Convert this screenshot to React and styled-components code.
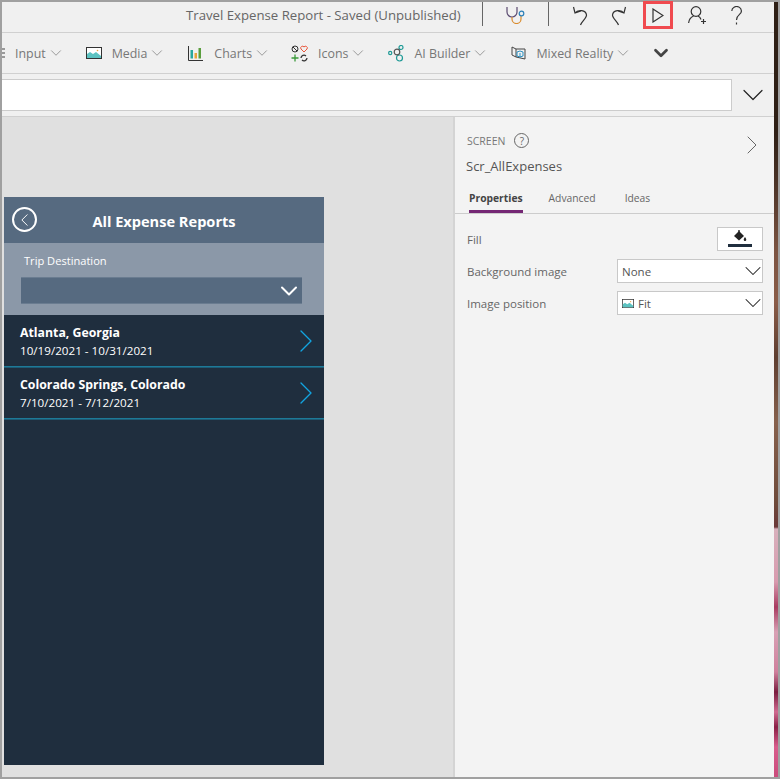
import React from 'react'
import styled, { createGlobalStyle } from 'styled-components'
import { ChevronDown, ChevronRight, ChevronLeft } from 'lucide-react'

const GlobalStyle = createGlobalStyle`
  html, body {
    margin: 0;
    padding: 0;
    background: #a0a0a0;
  }
  * {
    box-sizing: border-box;
  }
`
const Frame = styled.div`
  border-bottom: 2px solid #a0a0a0;
  border-left: 2px solid #a0a0a0;
  border-top: 2px solid #a0a0a0;
  display: flex;
  font-family: 'Open Sans', 'Liberation Sans', sans-serif;
  height: 779px;
  width: 780px;
`
const Main = styled.div`
  display: flex;
  flex: 1;
  flex-direction: column;
  min-width: 0;
`
const Edge = styled.div`
  background: linear-gradient(
    180deg,
    #2e1f15 0,
    #2e1f15 130px,
    #4a3226 180px,
    #7c5442 250px,
    #8a5c48 300px,
    #5e3e30 355px,
    #86604c 420px,
    #6e4a3a 500px,
    #6a3838 525px,
    #d8b0bc 527px,
    #d89aae 580px,
    #a83a60 605px,
    #d8a0b4 630px,
    #cf7f9c 670px,
    #7a1c3e 690px,
    #d06a90 710px,
    #8a1f45 725px,
    #d85c8c 745px,
    #c94a7a 777px
  );
  border-right: 2px solid #a0a0a0;
  width: 6px;
`
const TitleBar = styled.header`
  align-items: flex-start;
  background: #f0f0f0;
  border-bottom: 1px solid #d0d0d0;
  display: flex;
  height: 31px;
`
const Title = styled.span`
  color: #666;
  font-size: 13.2px;
  line-height: 27px;
  margin-left: 184px;
  white-space: nowrap;
  width: 296px;
`
const Divider = styled.span`
  background: #666;
  height: 24px;
  width: 1px;
`
const IconButton = styled.span`
  align-items: center;
  display: flex;
  height: 28px;
  justify-content: center;
  margin-left: ${(props) => props.gap || 0}px;
  margin-top: -1px;
  outline: ${(props) => (props.active ? '3px solid #f04a4f' : 'none')};
  outline-offset: -3px;
  width: ${(props) => props.width || 30}px;
`
const Ribbon = styled.nav`
  align-items: center;
  background: #f0f0f0;
  border-bottom: 1px solid #d0d0d0;
  display: flex;
  height: 41px;
  overflow: hidden;
`
const RibbonItem = styled.span`
  align-items: center;
  color: #777;
  display: flex;
  font-size: 12.4px;
  gap: 10px;
  margin-left: ${(props) => props.gap}px;
  white-space: nowrap;
`
const Caret = styled(ChevronDown)`
  color: #888;
  margin-left: -9px;
`
const FormulaBar = styled.div`
  align-items: center;
  background: #f0f0f0;
  border-bottom: 1px solid #d0d0d0;
  display: flex;
  height: 43px;
`
const FormulaInput = styled.div`
  background: #fff;
  border: 1px solid #ccc;
  border-left: none;
  height: 32px;
  width: 730px;
`
const FormulaToggle = styled.span`
  display: flex;
  justify-content: center;
  width: 42px;
`
const Body = styled.div`
  display: flex;
  flex: 1;
  min-height: 0;
`
const Canvas = styled.main`
  background: #e0e0e0;
  flex: 0 0 451px;
  padding: 80px 0 0 2px;
`
const Phone = styled.section`
  background: #1f2e3e;
  display: flex;
  flex-direction: column;
  height: 568px;
  width: 320px;
`
const PhoneHeader = styled.div`
  align-items: center;
  background: #566a80;
  color: #fff;
  display: flex;
  font-size: 14.6px;
  font-weight: 700;
  height: 46px;
  justify-content: center;
  padding-top: 2px;
  position: relative;
`
const BackButton = styled.span`
  align-items: center;
  border: 2px solid #fff;
  border-radius: 50%;
  display: flex;
  height: 25px;
  justify-content: center;
  left: 8px;
  position: absolute;
  top: 10px;
  width: 25px;
`
const Filter = styled.div`
  background: #8b98a8;
  color: #fff;
  font-size: 11.1px;
  height: 72px;
  padding: 10px 22px 0 17px;
`
const FilterLabel = styled.div`
  line-height: 16px;
  margin-left: 3px;
`
const FilterSelect = styled.div`
  align-items: center;
  background: #566a80;
  border-bottom: 1px solid #6a7c90;
  border-top: 1px solid #6a7c90;
  display: flex;
  height: 27px;
  justify-content: flex-end;
  margin-top: 8px;
`
const FilterCaret = styled(ChevronDown)`
  color: #fff;
  flex-shrink: 0;
  margin-right: -1px;
`
const Trip = styled.div`
  align-items: center;
  border-bottom: 1px solid #1d7a98;
  box-shadow: 0 1px 0 #1d5a74;
  color: #fff;
  display: flex;
  height: 52px;
  justify-content: space-between;
  padding: 2px 8px 0 16px;
`
const TripName = styled.div`
  font-size: 12.3px;
  font-weight: 700;
  line-height: 18px;
`
const TripDates = styled.div`
  font-size: 11.65px;
  line-height: 18px;
`
const TripArrow = styled(ChevronRight)`
  color: #12a4e0;
  flex-shrink: 0;
  margin: -2px -10px 0 0;
`
const Panel = styled.aside`
  background: #f3f3f3;
  border-left: 2px solid #d4d4d4;
  display: flex;
  flex: 1;
  flex-direction: column;
`
const PanelHead = styled.div`
  display: flex;
  justify-content: space-between;
  padding: 15px 14px 0 12px;
`
const PanelArrow = styled(ChevronRight)`
  color: #666;
  flex-shrink: 0;
  margin: -3px -8px 0 0;
`
const PanelKind = styled.div`
  align-items: center;
  color: #777;
  display: flex;
  font-size: 10.5px;
  gap: 9px;
  height: 17px;
`
const HelpDot = styled.span`
  align-items: center;
  border: 1px solid #666;
  border-radius: 50%;
  color: #666;
  display: flex;
  font-size: 10px;
  height: 15px;
  justify-content: center;
  width: 15px;
`
const PanelName = styled.div`
  color: #555;
  font-size: 13px;
  line-height: 18px;
  margin: 8px 0 0 -1px;
`
const Tabs = styled.div`
  border-bottom: 1px solid #ccc;
  display: flex;
  gap: 26px;
  height: 31px;
  margin-top: 8px;
  padding-left: 14px;
`
const Tab = styled.span`
  border-bottom: ${(props) => (props.active ? '3px solid #742774' : 'none')};
  color: ${(props) => (props.active ? '#444' : '#666')};
  font-size: 10.3px;
  font-weight: ${(props) => (props.active ? 700 : 400)};
  height: 30px;
  line-height: 30px;
  margin-right: ${(props) => props.extra || 0}px;
`
const Fields = styled.div`
  display: flex;
  flex-direction: column;
  gap: 8px;
  padding: 13px 11px 0 12px;
`
const Field = styled.div`
  align-items: center;
  color: #666;
  display: flex;
  font-size: 11.5px;
  height: 24px;
  justify-content: space-between;
`
const FillButton = styled.span`
  align-items: center;
  background: #fff;
  border: 1px solid #c8c8c8;
  display: flex;
  flex-direction: column;
  height: 24px;
  justify-content: flex-end;
  padding-bottom: 3px;
  width: 46px;
`
const FillBar = styled.span`
  background: #1f2e3e;
  display: block;
  height: 3px;
  margin-top: 1px;
  width: 24px;
`
const Select = styled.div`
  align-items: center;
  background: #fff;
  border: 1px solid #c8c8c8;
  color: #555;
  display: flex;
  gap: 4px;
  height: 24px;
  padding: 0 3px 0 4px;
  width: 146px;
`
const SelectText = styled.span`
  flex: 1;
`
const SelectCaret = styled(ChevronDown)`
  color: #222;
  flex-shrink: 0;
  margin-right: -8px;
`

function MediaIcon(props) {
  return (
    <svg width={props.size} height={props.size * 0.75} viewBox="0 0 16 12">
      <rect x=".5" y=".5" width="15" height="11" fill="#fff" stroke="#333" />
      <path d="M1 11V7l3-2 3 2 3-2 5 4v2z" fill="#5cc2c0" />
      <circle cx="11.5" cy="3.5" r=".8" fill="#e8a33d" />
    </svg>
  )
}
function ChartsIcon() {
  return (
    <svg width="16" height="15" viewBox="0 0 16 15">
      <path d="M.5 0v14.5H15" fill="none" stroke="#333" />
      <rect x="2.5" y="4" width="2.5" height="8.5" fill="#2aa8a0" />
      <rect x="6.5" y="7" width="2.5" height="5.5" fill="#e8a33d" />
      <rect x="10.5" y="2" width="2.5" height="10.5" fill="#5a9e3d" />
    </svg>
  )
}
function IconsIcon() {
  return (
    <svg width="17" height="17" viewBox="0 0 17 17">
      <circle cx="4" cy="4" r="3" fill="none" stroke="#333" />
      <path d="M2 2l4 4" stroke="#333" />
      <path d="M13 7l-3-3a1.800 1.800 0 0 1 3-2 1.800 1.800 0 0 1 3 2z" fill="none" stroke="#e8553a" />
      <path d="M4 9.500v7M.5 13h7" stroke="#3a9a3a" strokeWidth="1.300" />
      <path d="M10 13a3 3 0 0 1 5-2M16 13a3 3 0 0 1-5 2" fill="none" stroke="#333" strokeWidth="1.300" />
    </svg>
  )
}
function AiIcon() {
  return (
    <svg width="16" height="17" viewBox="0 0 16 17" fill="none" stroke="#1e9a96" strokeWidth="1.200">
      <circle cx="2.200" cy="8" r="1.600" />
      <circle cx="13" cy="2.500" r="2" />
      <circle cx="11.500" cy="13" r="3" />
      <circle cx="9" cy="7" r="2.800" stroke="#555" />
    </svg>
  )
}
function MixedIcon() {
  return (
    <svg width="15" height="15" viewBox="0 0 15 15" fill="none" stroke="#444">
      <path d="M1 1l4 2v8l-4-2zM5 3h9v10l-9-2" />
      <path d="M6 6l3-1 3 1v4l-3 1-3-1zM9 7v4" stroke="#2a8fc0" />
    </svg>
  )
}
function InputSliver() {
  return (
    <svg width="3" height="10" viewBox="0 0 3 10" stroke="#444">
      <path d="M0 1h3M0 5h3M0 9h3" />
    </svg>
  )
}
function StethoscopeIcon() {
  return (
    <svg width="19" height="17" viewBox="0 0 19 17" fill="none" strokeWidth="1.200">
      <path d="M1 0v5a5 5 0 0 0 10 0V0" stroke="#5a4a70" />
      <path d="M6 10v2a4.500 4.500 0 0 0 9 0V9" stroke="#d98a2b" />
      <circle cx="15.500" cy="6.500" r="2.300" stroke="#2a7fb8" />
    </svg>
  )
}
function UndoIcon(props) {
  return (
    <svg
      width="16"
      height="22"
      viewBox="0 0 16 22"
      fill="none"
      stroke="#333"
      strokeWidth="1.200"
      style={props.flip ? { transform: 'scaleX(-1)' } : undefined}
    >
      <path d="M1.500 3l1.500 6 6-2M3 9c3-4 11-3 11.500 2 .3 3-4.500 6-6 10" />
    </svg>
  )
}
function PlayIcon() {
  return (
    <svg width="12" height="15" viewBox="0 0 12 15" fill="none" stroke="#333" strokeWidth="1.200">
      <path d="M1 1l10 6.500-10 6.500z" />
    </svg>
  )
}
function UserAddIcon() {
  return (
    <svg width="19" height="18" viewBox="0 0 19 18" fill="none" stroke="#333" strokeWidth="1.200">
      <circle cx="8" cy="5.500" r="4.800" />
      <path d="M.6 17c.4-3.500 2.400-6 5-7M10 10c1.500.8 2.500 2 3 3.500M13 15.500h5M15.500 13v5" />
    </svg>
  )
}
function HelpIcon() {
  return (
    <svg width="11" height="19" viewBox="0 0 11 19" fill="none" stroke="#333" strokeWidth="1.200">
      <path d="M.8 5a4.800 4.400 0 1 1 7.500 3.600C6.500 10 5.500 11 5.500 14M5.500 16.500v2" />
    </svg>
  )
}
function PaintIcon() {
  return (
    <svg width="13" height="13" viewBox="0 0 13 13">
      <path d="M0 6l5-5 5 5-5 4.500z" fill="#222" />
      <path d="M5 3V0" stroke="#222" strokeWidth="1.400" />
      <path d="M11 7c.8 1.200 1.300 2 1.300 2.700a1.300 1.300 0 0 1-2.600 0c0-.7.500-1.500 1.300-2.700z" fill="#222" />
    </svg>
  )
}

function Trips(props) {
  return (
    <Trip>
      <div>
        <TripName>{props.name}</TripName>
        <TripDates>{props.dates}</TripDates>
      </div>
      <TripArrow size={40} strokeWidth={0.8} />
    </Trip>
  )
}

export default function App() {
  return (
    <Frame>
      <GlobalStyle />
      <Main>
        <TitleBar>
          <Title>Travel Expense Report - Saved (Unpublished)</Title>
          <Divider />
          <IconButton width={65}>
            <StethoscopeIcon />
          </IconButton>
          <Divider />
          <IconButton width={30} gap={16}>
            <UndoIcon />
          </IconButton>
          <IconButton width={30} gap={9}>
            <UndoIcon flip />
          </IconButton>
          <IconButton width={30} gap={9} active>
            <PlayIcon />
          </IconButton>
          <IconButton width={30} gap={9}>
            <UserAddIcon />
          </IconButton>
          <IconButton width={30} gap={9}>
            <HelpIcon />
          </IconButton>
        </TitleBar>
        <Ribbon>
          <RibbonItem gap={0}>
            <InputSliver />
          </RibbonItem>
          <RibbonItem gap={10}>
            Input
            <Caret size={18} strokeWidth={1.1} />
          </RibbonItem>
          <RibbonItem gap={21}>
            <MediaIcon size={16} />
            Media
            <Caret size={18} strokeWidth={1.1} />
          </RibbonItem>
          <RibbonItem gap={22}>
            <ChartsIcon />
            Charts
            <Caret size={18} strokeWidth={1.1} />
          </RibbonItem>
          <RibbonItem gap={20}>
            <IconsIcon />
            Icons
            <Caret size={18} strokeWidth={1.1} />
          </RibbonItem>
          <RibbonItem gap={21}>
            <AiIcon />
            AI Builder
            <Caret size={18} strokeWidth={1.1} />
          </RibbonItem>
          <RibbonItem gap={22}>
            <MixedIcon />
            Mixed Reality
            <Caret size={18} strokeWidth={1.1} />
          </RibbonItem>
          <RibbonItem gap={18}>
            <ChevronDown size={22} strokeWidth={3} color="#444" />
          </RibbonItem>
        </Ribbon>
        <FormulaBar>
          <FormulaInput />
          <FormulaToggle>
            <ChevronDown size={36} strokeWidth={0.8} color="#222" />
          </FormulaToggle>
        </FormulaBar>
        <Body>
          <Canvas>
            <Phone>
              <PhoneHeader>
                <BackButton>
                  <ChevronLeft size={24} strokeWidth={1.1} color="#fff" />
                </BackButton>
                All Expense Reports
              </PhoneHeader>
              <Filter>
                <FilterLabel>Trip Destination</FilterLabel>
                <FilterSelect>
                  <FilterCaret size={28} strokeWidth={1.7} />
                </FilterSelect>
              </Filter>
              <Trips name="Atlanta, Georgia" dates="10/19/2021 - 10/31/2021" />
              <Trips name="Colorado Springs, Colorado" dates="7/10/2021 - 7/12/2021" />
            </Phone>
          </Canvas>
          <Panel>
            <PanelHead>
              <div>
                <PanelKind>
                  SCREEN
                  <HelpDot>?</HelpDot>
                </PanelKind>
                <PanelName>Scr_AllExpenses</PanelName>
              </div>
              <PanelArrow size={32} strokeWidth={0.75} />
            </PanelHead>
            <Tabs>
              <Tab active>Properties</Tab>
              <Tab extra={3}>Advanced</Tab>
              <Tab>Ideas</Tab>
            </Tabs>
            <Fields>
              <Field>
                Fill
                <FillButton>
                  <PaintIcon />
                  <FillBar />
                </FillButton>
              </Field>
              <Field>
                Background image
                <Select>
                  <SelectText>None</SelectText>
                  <SelectCaret size={28} strokeWidth={0.9} />
                </Select>
              </Field>
              <Field>
                Image position
                <Select>
                  <MediaIcon size={12} />
                  <SelectText>Fit</SelectText>
                  <SelectCaret size={28} strokeWidth={0.9} />
                </Select>
              </Field>
            </Fields>
          </Panel>
        </Body>
      </Main>
      <Edge />
    </Frame>
  )
}
